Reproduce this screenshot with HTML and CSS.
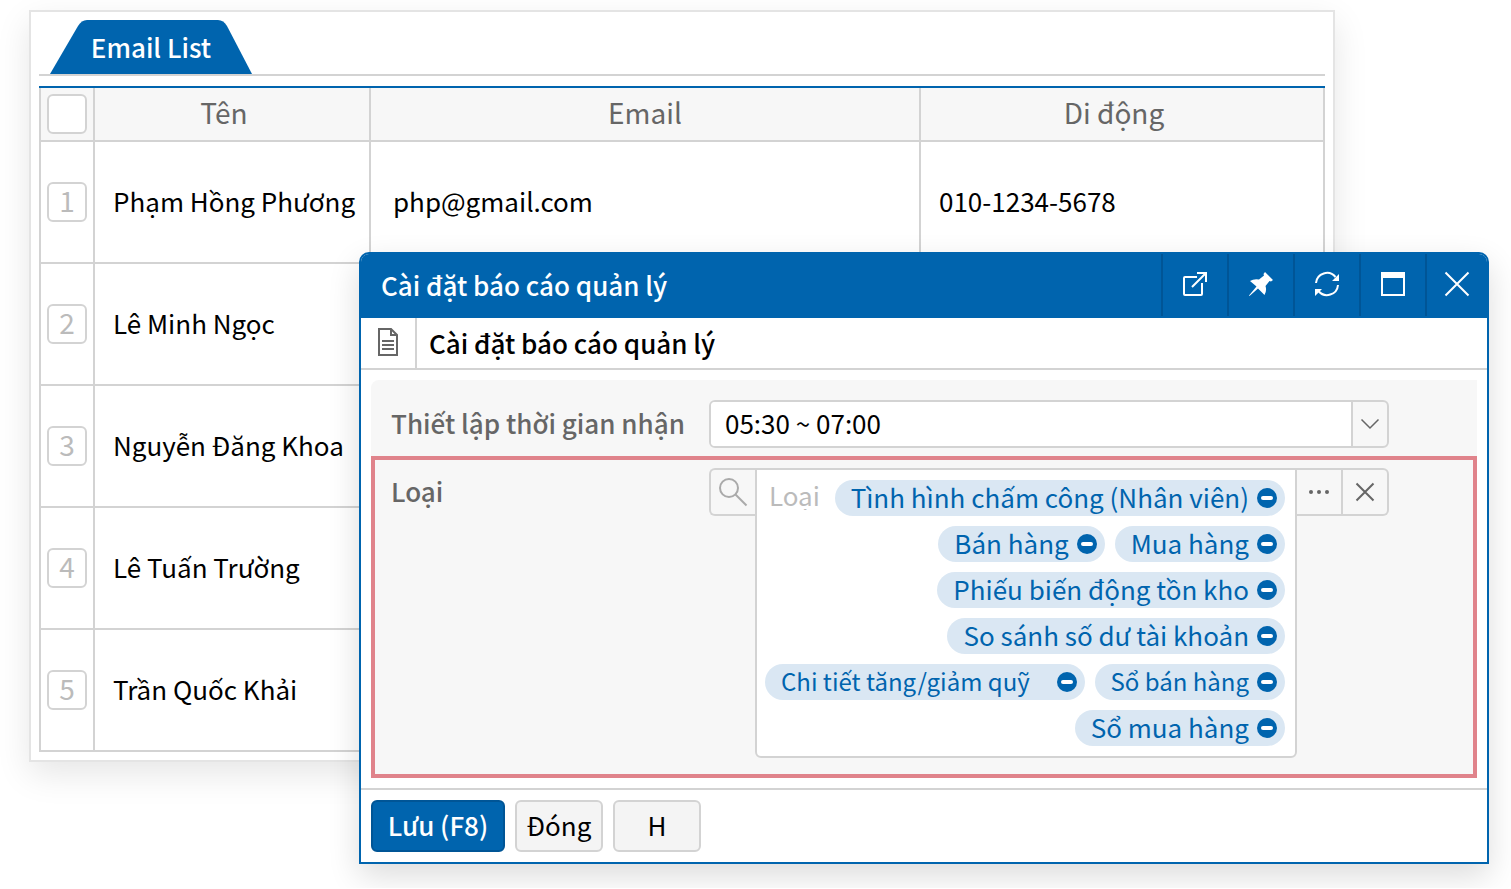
FILE: index.html
```
<!DOCTYPE html>
<html lang="vi">
<head>
<meta charset="utf-8">
<title>Email List</title>
<link rel="stylesheet" href="styles.css">
</head>
<body>
<main class="stage">
  <section class="panel">
    <nav class="tabs">
      <a class="tab" href="#list">
        <svg class="tab-shape" viewBox="0 0 202 54" preserveAspectRatio="none" aria-hidden="true"><path d="M0 54L28 6Q31.500 0 37 0H168Q173.500 0 177 6L202 54Z"/></svg>
        <span class="tab-text">Email List</span>
      </a>
    </nav>
    <table class="grid" id="list">
      <colgroup><col class="col-check"><col class="col-name"><col class="col-email"><col></colgroup>
      <thead>
        <tr><th><input class="check" type="checkbox" aria-label="Tất cả"></th><th class="sortable">Tên</th><th>Email</th><th class="sortable">Di động</th></tr>
      </thead>
      <tbody>
        <tr><td class="num"><button class="row-no">1</button></td><td>Phạm Hồng Phương</td><td class="email">php@gmail.com</td><td>010-1234-5678</td></tr>
        <tr><td class="num"><button class="row-no">2</button></td><td>Lê Minh Ngọc</td><td></td><td></td></tr>
        <tr><td class="num"><button class="row-no">3</button></td><td>Nguyễn Đăng Khoa</td><td></td><td></td></tr>
        <tr><td class="num"><button class="row-no">4</button></td><td>Lê Tuấn Trường</td><td></td><td></td></tr>
        <tr><td class="num"><button class="row-no">5</button></td><td>Trần Quốc Khải</td><td></td><td></td></tr>
      </tbody>
    </table>
  </section>

  <section class="dialog" role="dialog" aria-labelledby="dialog-title">
    <header class="dialog-head">
      <h1 class="dialog-title" id="dialog-title">Cài đặt báo cáo quản lý</h1>
      <button class="tool" aria-label="Mở cửa sổ mới"><svg viewBox="0 0 24 24" width="24" height="24"><path d="M14 5H2Q1 5 1 6V22Q1 23 2 23H18Q19 23 19 22V11M9 15L22 2M14 1H23V10" fill="none" stroke="#fff" stroke-width="2"/></svg></button>
      <button class="tool" aria-label="Ghim"><svg viewBox="0 0 24 24" width="24" height="24"><path d="M16 0L24 8L22 9.500L20.500 9L16.500 14Q18 19 15.500 23L9 16.500L0.500 24L0 23.500L7.500 14.500L1 9Q5 6.500 10 7.500L15 3.500L14.500 2Z" fill="#fff"/></svg></button>
      <button class="tool" aria-label="Tải lại"><svg viewBox="0 0 24 24" width="24" height="24"><path d="M1 11A11 11 0 0 1 20.500 5M23 13A11 11 0 0 1 3.500 19" fill="none" stroke="#fff" stroke-width="2"/><path d="M24 2V9H17ZM0 24V17H7Z" fill="#fff"/></svg></button>
      <button class="tool" aria-label="Phóng to"><svg viewBox="0 0 24 24" width="24" height="24"><path d="M0 0H24V24H0ZM2 6V22H22V6Z" fill="#fff" fill-rule="evenodd"/></svg></button>
      <button class="tool" aria-label="Đóng cửa sổ"><svg viewBox="0 0 24 24" width="24" height="24"><path d="M0.500 0.500L23.500 23.500M23.500 0.500L0.500 23.500" stroke="#fff" stroke-width="2"/></svg></button>
    </header>
    <div class="subhead">
      <span class="doc"><svg viewBox="0 0 20 28" width="20" height="28"><path d="M1 1H13L19 7V27H1Z" fill="none" stroke="#666" stroke-width="2"/><path d="M12 1H14V6H19V8H12ZM4 12H16V14H4ZM4 16H16V18H4ZM4 20H16V22H4Z" fill="#666"/></svg></span>
      <h2 class="subtitle">Cài đặt báo cáo quản lý</h2>
    </div>
    <form class="form">
      <div class="row row-time">
        <label class="label" for="time">Thiết lập thời gian nhận</label>
        <div class="select-box">
          <select class="select" id="time"><option>05:30 ~ 07:00</option></select>
          <svg class="chevron" viewBox="0 0 18 10" width="18" height="10"><path d="M0.500 0.500L9 9L17.500 0.500" fill="none" stroke="#666" stroke-width="1.500"/></svg>
        </div>
      </div>
      <div class="row row-type">
        <label class="label" for="type">Loại</label>
        <div class="picker">
          <button type="button" class="side side-search" aria-label="Tìm"><svg viewBox="0 0 28 28" width="28" height="28"><circle cx="10" cy="10" r="9" fill="none" stroke="#aaa" stroke-width="2"/><path d="M16.500 16.500L27.500 27.500" stroke="#aaa" stroke-width="2"/></svg></button>
          <div class="chips">
            <div class="chip-row">
              <input class="chip-input" id="type" type="text" placeholder="Loại">
              <span class="chip">Tình hình chấm công (Nhân viên)<button type="button" class="minus" aria-label="Xóa"></button></span>
            </div>
            <div class="chip-row">
              <span class="chip">Bán hàng<button type="button" class="minus" aria-label="Xóa"></button></span>
              <span class="chip">Mua hàng<button type="button" class="minus" aria-label="Xóa"></button></span>
            </div>
            <div class="chip-row"><span class="chip">Phiếu biến động tồn kho<button type="button" class="minus" aria-label="Xóa"></button></span></div>
            <div class="chip-row"><span class="chip">So sánh số dư tài khoản<button type="button" class="minus" aria-label="Xóa"></button></span></div>
            <div class="chip-row chip-row-tight">
              <span class="chip chip-wide">Chi tiết tăng/giảm quỹ<button type="button" class="minus" aria-label="Xóa"></button></span>
              <span class="chip">Sổ bán hàng<button type="button" class="minus" aria-label="Xóa"></button></span>
            </div>
            <div class="chip-row"><span class="chip">Sổ mua hàng<button type="button" class="minus" aria-label="Xóa"></button></span></div>
          </div>
          <button type="button" class="side" aria-label="Thêm"><svg viewBox="0 0 20 4" width="20" height="4"><g fill="#666"><circle cx="2" cy="2" r="2"/><circle cx="10" cy="2" r="2"/><circle cx="18" cy="2" r="2"/></g></svg></button>
          <button type="button" class="side side-clear" aria-label="Xóa tất cả"><svg viewBox="0 0 18 18" width="18" height="18"><path d="M0.500 0.500L17.500 17.500M17.500 0.500L0.500 17.500" stroke="#666" stroke-width="2"/></svg></button>
        </div>
      </div>
    </form>
    <footer class="actions">
      <button class="btn btn-primary">Lưu (F8)</button>
      <button class="btn">Đóng</button>
      <button class="btn">H</button>
    </footer>
  </section>
</main>
</body>
</html>
```
FILE: styles.css
```
* { box-sizing: border-box; }
body {
  margin: 0;
  background: #fff;
  color: #000;
  font: 26px/36px "Noto Sans CJK KR", "Noto Sans", sans-serif;
}
button, input, select { font: inherit; color: inherit; margin: 0; }
button { padding: 0; border: 0; background: none; }
h1, h2 { margin: 0; font-size: 26px; font-weight: 500; }
svg { display: block; overflow: visible; }

.stage { position: relative; padding: 10px 176px 126px 29px; }
.panel {
  padding: 8px;
  border: 2px solid #e4e4e4;
  background: #fff;
  box-shadow: 0 12px 32px rgba(0, 0, 0, .1);
}
.tabs { display: flex; padding-left: 11px; border-bottom: 2px solid #d3d3d3; margin-bottom: 10px; }
.tab {
  display: grid;
  width: 202px;
  height: 54px;
  color: #fff;
  font-weight: 500;
  text-decoration: none;
}
.tab-shape, .tab-text { grid-area: 1 / 1; }
.tab-shape { width: 100%; height: 54px; fill: #0064ae; }
.tab-text { z-index: 1; align-self: center; text-align: center; }

.grid {
  width: 100%;
  table-layout: fixed;
  border-collapse: separate;
  border-spacing: 0;
  border-top: 2px solid #0064ae;
}
.col-check { width: 54px; }
.col-name { width: 276px; }
.col-email { width: 550px; }
.grid th, .grid td {
  padding: 0 0 2px 18px;
  border-left: 2px solid #d3d3d3;
  border-bottom: 2px solid #d3d3d3;
  text-align: left;
  white-space: nowrap;
}
.grid th:last-child, .grid td:last-child { border-right: 2px solid #d3d3d3; }
.grid th { height: 54px; padding: 0 0 4px; background: #f7f7f7; color: #666; font-size: 28px; font-weight: 400; text-align: center; }
.grid th:first-child { padding: 0; }
.grid .sortable { padding-right: 16px; }
.grid td { height: 122px; }
.grid .email { padding-left: 22px; }
.grid .num { padding: 0; }
.check, .row-no {
  display: block;
  width: 40px;
  height: 40px;
  margin: 0 auto;
  border: 2px solid #d3d3d3;
  border-radius: 6px;
  background: #fff;
  color: #bbb;
}
.row-no { padding-bottom: 4px; font-size: 28px; line-height: 32px; }
.check { appearance: none; }

.dialog {
  position: absolute;
  top: 252px;
  left: 359px;
  right: 22px;
  border: 2px solid #0064ae;
  border-radius: 10px 10px 0 0;
  background: #fff;
  box-shadow: 0 12px 32px rgba(0, 0, 0, .14);
}
.dialog-head { display: flex; height: 64px; background: #0064ae; border-radius: 8px 8px 0 0; color: #fff; }
.dialog-title { flex: 1; align-self: center; padding: 0 0 2px 20px; }
.tool {
  display: grid;
  place-items: center;
  width: 66px;
  height: 62px;
  padding-bottom: 2px;
  border-left: 2px solid #005596;
}
.tool:last-child { width: 62px; }
.subhead { display: flex; height: 52px; border-bottom: 2px solid #d3d3d3; }
.doc { display: grid; place-items: center; width: 56px; padding-bottom: 2px; border-right: 2px solid #d3d3d3; }
.subtitle { align-self: center; padding-left: 12px; }

.form { padding: 10px; border-bottom: 2px solid #d3d3d3; }
.row { display: grid; grid-template-columns: 318px minmax(0, 680px); background: #f7f7f7; }
.row-time { padding: 20px 20px 8px; border-radius: 8px 0 0 0; }
.row-type { padding: 8px 16px 16px; border: 4px solid #e0838b; }
.label { align-self: start; padding-top: 5px; color: #666; font-weight: 500; white-space: nowrap; }
.select-box {
  display: flex;
  align-items: center;
  height: 48px;
  border: 2px solid #d3d3d3;
  border-radius: 6px;
}
.select {
  flex: 1;
  height: 44px;
  padding: 0 14px 2px;
  border: 0;
  border-right: 2px solid #d3d3d3;
  border-radius: 4px 0 0 4px;
  background: #fff;
  appearance: none;
}
.chevron { margin: 0 8px; }

.picker { display: flex; align-items: flex-start; }
.side {
  flex: none;
  display: grid;
  place-items: center;
  width: 46px;
  height: 48px;
  border: 2px solid #d3d3d3;
  border-left: 0;
}
.side-search { border-left: 2px solid #d3d3d3; border-right: 0; border-radius: 6px 0 0 6px; }
.side-clear { border-radius: 0 6px 6px 0; }
.chips {
  flex: 1;
  min-width: 0;
  display: flex;
  flex-direction: column;
  gap: 10px;
  padding: 10px 10px 10px 8px;
  border: 2px solid #d3d3d3;
  border-radius: 0 0 6px 6px;
  background: #fff;
}
.chip-row { display: flex; justify-content: flex-end; gap: 10px; }
.chip {
  display: flex;
  align-items: flex-start;
  justify-content: space-between;
  gap: 8px;
  height: 36px;
  padding: 0 8px 0 16px;
  border-radius: 18px;
  background: #dae7f3;
  color: #0064ae;
  line-height: 34px;
  white-space: nowrap;
}
.chip-row-tight .chip { gap: 8px; font-size: 24px; }
.chip-wide { flex: 1; }
.chip-input {
  flex: 1;
  min-width: 0;
  height: 30px;
  padding: 0 0 0 4px;
  border: 0;
  outline: 0;
  background: none;
  line-height: 30px;
}
.chip-input::placeholder { color: #bbb; opacity: 1; line-height: 36px; }
.minus {
  display: grid;
  place-items: center;
  width: 20px;
  height: 20px;
  margin-top: 8px;
  border-radius: 50%;
  background: #0064ae;
}
.minus::before { content: ""; width: 12px; height: 4px; border-radius: 2px; background: #fff; }

.actions { display: flex; gap: 10px; padding: 10px; }
.btn {
  min-width: 88px;
  height: 52px;
  padding-bottom: 2px;
  border: 2px solid #d3d3d3;
  border-radius: 6px;
  background: #f4f4f4;
}
.btn-primary { min-width: 134px; border-color: #005596; background: #0064ae; color: #fff; font-weight: 500; }
```
